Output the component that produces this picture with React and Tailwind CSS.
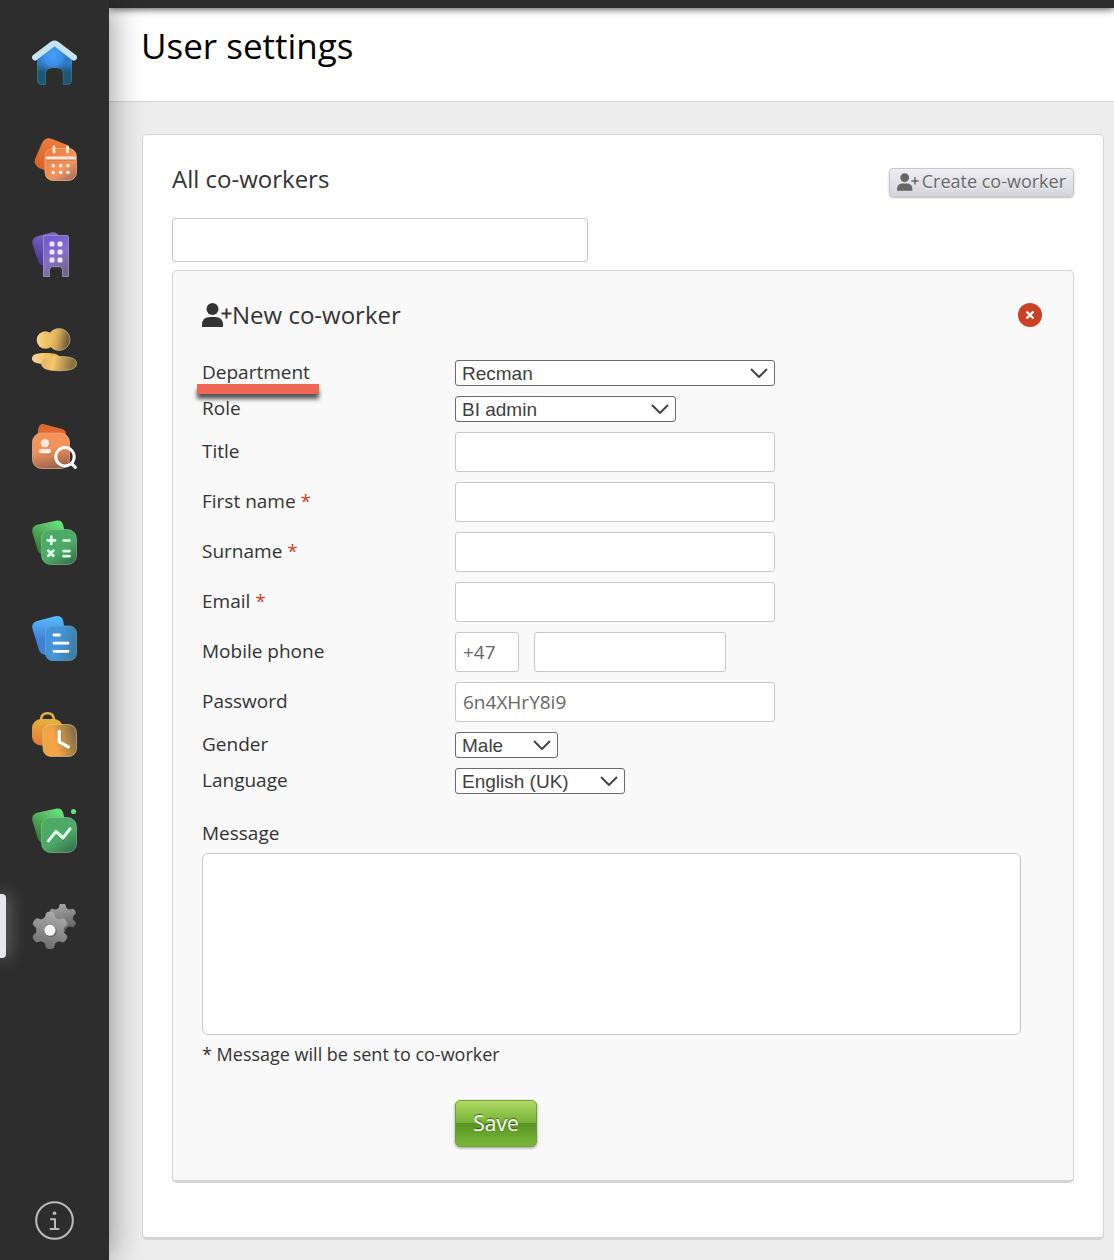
import React, { useState } from 'react';

// Outline of a six-toothed cog with soft corners
const gearPath = (cx, cy, radius, depth) => {
  const points = [];
  for (let i = 0; i < 144; i++) {
    const angle = (i / 144) * Math.PI * 2;
    const r = radius + depth * Math.tanh(2.2 * Math.cos(6 * (angle - Math.PI / 2)) + 0.1);
    points.push(`${(cx + r * Math.cos(angle)).toFixed(2)} ${(cy + r * Math.sin(angle)).toFixed(2)}`);
  }
  return `M${points.join('L')}Z`;
};

const HomeIcon = () => (
  <svg width="45" height="45" viewBox="0 0 45 45" fill="none">
    <defs>
      <linearGradient id="home-base" x1="0" y1="12" x2="0" y2="45" gradientUnits="userSpaceOnUse">
        <stop offset="0.35" stopColor="#2f80cf" />
        <stop offset="0.6" stopColor="#1f5673" />
      </linearGradient>
      <radialGradient id="home-glow" cx="21" cy="16" r="19" gradientUnits="userSpaceOnUse">
        <stop offset="0" stopColor="#44a0fa" />
        <stop offset="0.5" stopColor="#3b8ee6" />
        <stop offset="1" stopColor="#225a80" stopOpacity="0" />
      </radialGradient>
    </defs>
    <path d="M5 18L20 7.500Q22.500 6 25 7.500L40 18V40Q40 45 35 45H31V34Q31 28 25 28H20Q14 28 14 34V45H10Q5 45 5 40Z" fill="url(#home-base)" />
    <path d="M5 18L20 7.500Q22.500 6 25 7.500L40 18V40Q40 45 35 45H31V34Q31 28 25 28H20Q14 28 14 34V45H10Q5 45 5 40Z" fill="url(#home-glow)" />
    <path d="M5.500 22V40Q5.500 44.500 10 44.500H13.500V34Q14 27.700 20 27.700H25Q31 27.700 31.300 34V44.500H35Q39.500 44.500 39.500 40V22" stroke="#3d8aa5" strokeOpacity="0.45" />
    <path d="M3 17.500L20.500 4.200Q22.500 3 24.500 4.200L42 17.500" stroke="#c3e3f0" strokeWidth="6" strokeLinecap="round" strokeLinejoin="round" />
  </svg>
);

const CalendarIcon = () => (
  <svg width="45" height="45" viewBox="0 0 45 45" fill="none">
    <defs>
      <linearGradient id="cal-back" x1="20" y1="2" x2="8" y2="35" gradientUnits="userSpaceOnUse">
        <stop stopColor="#ed7e3c" />
        <stop offset="1" stopColor="#d75f28" />
      </linearGradient>
      <linearGradient id="cal-front" x1="20" y1="14" x2="44" y2="45" gradientUnits="userSpaceOnUse">
        <stop stopColor="#e9803f" />
        <stop offset="0.55" stopColor="#f09560" />
        <stop offset="1" stopColor="#976a5b" />
      </linearGradient>
    </defs>
    <path d="M20 3L34 8.500Q40 11 38 17L30 35Q27 39 21 37L8 32.500Q1 29 3 23L10 7Q13 0.500 20 3Z" fill="url(#cal-back)" />
    <rect x="13" y="12.500" width="31.500" height="32" rx="8" fill="url(#cal-front)" stroke="#f6b78f" strokeOpacity="0.7" />
    <path d="M14.500 23H43" stroke="#b55720" strokeOpacity="0.6" strokeWidth="3" />
    <path d="M15 22H42.500M22 11V16M35.500 11V16" stroke="#fbe8dc" strokeWidth="2.800" strokeLinecap="round" />
    {[21.3, 28.7, 36].map((x) => (
      <g key={x} fill="#fff4ec">
        <circle cx={x} cy="29.800" r="1.700" />
        <circle cx={x} cy="36.500" r="1.700" />
      </g>
    ))}
  </svg>
);

const BuildingIcon = () => (
  <svg width="45" height="45" viewBox="0 0 45 45" fill="none">
    <defs>
      <linearGradient id="bld-back" x1="18" y1="0" x2="8" y2="34" gradientUnits="userSpaceOnUse">
        <stop stopColor="#8068c4" />
        <stop offset="1" stopColor="#45339b" />
      </linearGradient>
      <linearGradient id="bld-front" x1="12" y1="6" x2="37" y2="42" gradientUnits="userSpaceOnUse">
        <stop stopColor="#7059d4" />
        <stop offset="0.5" stopColor="#8571c4" />
        <stop offset="1" stopColor="#6c6486" />
      </linearGradient>
    </defs>
    <path d="M6 4L20 0.300Q25 -0.500 27 4L30 33H12Q8 34 6 29L0.500 12Q-0.500 6 6 4Z" fill="url(#bld-back)" />
    <path d="M13 3.500H35Q36.500 3.500 36.500 5V44.500H30.500V38Q30.500 34.700 27.500 34.700H20.500Q17.500 34.700 17.500 38V44.500H11.500V5Q11.500 3.500 13 3.500Z" fill="url(#bld-front)" stroke="#afa2d8" strokeOpacity="0.7" />
    {[9.5, 17.5, 25.5].map((y) => (
      <g key={y} fill="#eee6ff">
        <rect x="17.500" y={y} width="5" height="5" rx="1.500" />
        <rect x="25.500" y={y} width="5" height="5" rx="1.500" />
      </g>
    ))}
  </svg>
);

const PeopleIcon = () => (
  <svg width="45" height="45" viewBox="0 0 45 45" fill="none">
    <defs>
      <linearGradient id="ppl-back" x1="0" y1="0" x2="1" y2="0">
        <stop stopColor="#f7d79c" />
        <stop offset="0.7" stopColor="#f3b94b" />
      </linearGradient>
      <linearGradient id="ppl-head" x1="16" y1="9" x2="39" y2="14" gradientUnits="userSpaceOnUse">
        <stop offset="0.1" stopColor="#f0c266" />
        <stop offset="0.4" stopColor="#d7aa58" />
        <stop offset="0.85" stopColor="#72603c" />
      </linearGradient>
      <linearGradient id="ppl-body" x1="9" y1="32" x2="45" y2="38" gradientUnits="userSpaceOnUse">
        <stop offset="0.1" stopColor="#e5ba65" />
        <stop offset="0.35" stopColor="#f6c76a" />
        <stop offset="0.85" stopColor="#8b7040" />
      </linearGradient>
    </defs>
    <circle cx="13.500" cy="12" r="8.800" fill="url(#ppl-back)" />
    <path d="M14 25C24 25 28 27 28 31S23 36 14 36S0 34.500 0 30.500S4 25 14 25Z" fill="url(#ppl-back)" />
    <circle cx="27" cy="11.500" r="11" fill="url(#ppl-head)" stroke="#dcc28a" strokeOpacity="0.6" />
    <path d="M27 28.500C40 28.500 44.500 31 44.500 35.500S40 42.700 27 42.700S9.500 40 9.500 35.500S14 28.500 27 28.500Z" fill="url(#ppl-body)" stroke="#dcc28a" strokeOpacity="0.7" />
  </svg>
);

const CandidateSearchIcon = () => (
  <svg width="45" height="45" viewBox="0 0 45 45" fill="none">
    <defs>
      <linearGradient id="cs-front" x1="17" y1="15" x2="24" y2="46" gradientUnits="userSpaceOnUse">
        <stop offset="0.3" stopColor="#f1935b" />
        <stop offset="1" stopColor="#935f4c" />
      </linearGradient>
    </defs>
    <path d="M13 0.400L30 5Q34 6 34 10V20H4L6.500 4Q8 -1 13 0.400Z" fill="#df6a2f" />
    <rect x="0.500" y="9.200" width="37" height="35.300" rx="9" fill="url(#cs-front)" stroke="#f6b68d" strokeOpacity="0.7" />
    <circle cx="13.500" cy="20" r="4.200" fill="#a64f20" fillOpacity="0.4" />
    <circle cx="13" cy="19.300" r="4.200" fill="#fdebdf" />
    <rect x="7.500" y="26" width="12" height="4.500" rx="2.200" fill="#a64f20" fillOpacity="0.5" />
    <rect x="7" y="25" width="12" height="4.500" rx="2.200" fill="#fdebdf" />
    <circle cx="33" cy="32.700" r="9.200" stroke="#fff" strokeWidth="3" />
    <path d="M39.700 39.700L43.300 43.300" stroke="#fff" strokeWidth="3.200" strokeLinecap="round" />
  </svg>
);

const GreenTile = ({ id, children }) => (
  <svg width="45" height="45" viewBox="0 0 45 45" fill="none">
    <defs>
      <linearGradient id={`${id}-back`} x1="25" y1="2" x2="6" y2="28" gradientUnits="userSpaceOnUse">
        <stop stopColor="#66df7b" />
        <stop offset="1" stopColor="#37803f" />
      </linearGradient>
      <linearGradient id={`${id}-front`} x1="20" y1="12" x2="42" y2="45" gradientUnits="userSpaceOnUse">
        <stop offset="0.5" stopColor="#4daa66" />
        <stop offset="1" stopColor="#34664a" />
      </linearGradient>
    </defs>
    <path d="M6 4.500L25 0.500Q29.500 -0.300 31 4.500L37 27L14 35Q7 36 5 28L0.500 13Q-1 6 6 4.500Z" fill={`url(#${id}-back)`} />
    <rect x="9.500" y="9.500" width="35" height="35" rx="9" fill={`url(#${id}-front)`} stroke="#83ca91" strokeOpacity="0.6" />
    {children}
  </svg>
);

const CalculatorIcon = () => (
  <GreenTile id="calc">
    <path d="M19.300 16.700V24M15.600 20.300H23M31.500 20.500H37.500M16.300 30.700L21.300 35.700M21.300 30.700L16.300 35.700M31.500 31.200H37.500M31.500 36.200H37.500" stroke="#dcffe5" strokeWidth="2.700" strokeLinecap="round" />
  </GreenTile>
);

const ChartIcon = () => (
  <GreenTile id="chart">
    <path d="M17 34L24 24L31 31L38 21.500" stroke="#245a37" strokeOpacity="0.5" strokeWidth="3" strokeLinecap="round" />
    <path d="M16.500 33L24 23.500L31 30L38 21" stroke="#e1fae9" strokeWidth="3.200" strokeLinecap="round" strokeLinejoin="round" />
    <circle cx="41.500" cy="3.500" r="2.600" fill="#5fe17b" />
  </GreenTile>
);

const DocumentIcon = () => (
  <svg width="45" height="45" viewBox="0 0 45 45" fill="none">
    <defs>
      <linearGradient id="doc-back" x1="15" y1="2" x2="15" y2="38" gradientUnits="userSpaceOnUse">
        <stop stopColor="#55b9f8" />
        <stop offset="0.6" stopColor="#407fdc" />
      </linearGradient>
      <linearGradient id="doc-front" x1="18" y1="26" x2="45" y2="32" gradientUnits="userSpaceOnUse">
        <stop offset="0.3" stopColor="#4594da" />
        <stop offset="1" stopColor="#3f7b9b" />
      </linearGradient>
    </defs>
    <path d="M5 5L23 0.300Q29 -0.800 31 4L36 32L14 38.500Q9 39.500 7 34L0.500 13Q-1 7 5 5Z" fill="url(#doc-back)" />
    <rect x="13.500" y="10" width="31" height="34.500" rx="7" fill="url(#doc-front)" stroke="#62b2d8" strokeOpacity="0.6" />
    <path d="M22 19H27.500M22 27.200H36M22 35.300H36" stroke="#fff" strokeWidth="2.800" strokeLinecap="round" />
  </svg>
);

const BagClockIcon = () => (
  <svg width="45" height="45" viewBox="0 0 45 45" fill="none">
    <defs>
      <linearGradient id="bag-back" x1="15" y1="6" x2="12" y2="34" gradientUnits="userSpaceOnUse">
        <stop stopColor="#e8b33a" />
        <stop offset="1" stopColor="#e47a38" />
      </linearGradient>
      <linearGradient id="bag-front" x1="16" y1="36" x2="45" y2="28" gradientUnits="userSpaceOnUse">
        <stop offset="0.3" stopColor="#f0a443" />
        <stop offset="0.95" stopColor="#8a704d" />
      </linearGradient>
    </defs>
    <path d="M9 10V7.500Q9.500 1.300 15.500 1.300T22 7.500V10" stroke="#e3b140" strokeWidth="2.600" />
    <rect x="0" y="7" width="31" height="26.500" rx="9" fill="url(#bag-back)" />
    <rect x="11" y="12.500" width="33.500" height="32" rx="8" fill="url(#bag-front)" stroke="#efc98c" strokeOpacity="0.6" />
    <path d="M28 20V31L37.500 36" stroke="#a65d20" strokeOpacity="0.5" strokeWidth="3.300" strokeLinecap="round" />
    <path d="M27.300 19.500V30L36.500 35" stroke="#fff" strokeWidth="3.300" strokeLinecap="round" strokeLinejoin="round" />
  </svg>
);

const SettingsIcon = () => (
  <svg width="45" height="45" viewBox="0 0 45 45" fill="none">
    <defs>
      <linearGradient id="gear-back" x1="30" y1="0" x2="34" y2="27" gradientUnits="userSpaceOnUse">
        <stop stopColor="#a5a5a5" />
        <stop offset="1" stopColor="#5c5c5c" />
      </linearGradient>
      <linearGradient id="gear-front" x1="26" y1="10" x2="16" y2="45" gradientUnits="userSpaceOnUse">
        <stop stopColor="#aaaaaa" />
        <stop offset="1" stopColor="#6e6e6e" />
      </linearGradient>
    </defs>
    <path d={gearPath(30.5, 14, 12.5, 2)} fill="url(#gear-back)" />
    <path d={gearPath(18, 26.3, 16, 2.5)} fill="url(#gear-front)" stroke="#b8b8b8" strokeOpacity="0.4" strokeWidth="0.700" />
    <circle cx="19" cy="27.500" r="5.800" fill="#444" fillOpacity="0.45" />
    <circle cx="18" cy="26.300" r="5.500" fill="#f4f4f4" />
  </svg>
);

const InfoIcon = () => (
  <svg width="39" height="39" viewBox="0 0 39 39" fill="none" stroke="#bdbdbd">
    <circle cx="19.500" cy="19.500" r="18.300" strokeWidth="2" />
    <path d="M16 18.300H20V27.700M15.500 28H23.500" strokeWidth="2" strokeLinecap="round" strokeLinejoin="round" />
    <circle cx="19.500" cy="12.300" r="1.800" fill="#bdbdbd" stroke="none" />
  </svg>
);

const UserPlusIcon = ({ className }) => (
  <svg viewBox="0 0 30 24" fill="currentColor" className={className}>
    <circle cx="10.500" cy="6" r="6" />
    <path d="M0 24V22Q0 14 8 14H13Q21 14 21 22V24Z" />
    <path d="M19.500 10.500H29.500M24.500 5.500V15.500" stroke="currentColor" strokeWidth="2" />
  </svg>
);

const navItems = [
  { label: 'Home', icon: HomeIcon },
  { label: 'Calendar', icon: CalendarIcon },
  { label: 'Companies', icon: BuildingIcon },
  { label: 'People', icon: PeopleIcon },
  { label: 'Candidates', icon: CandidateSearchIcon },
  { label: 'Accounting', icon: CalculatorIcon },
  { label: 'Documents', icon: DocumentIcon },
  { label: 'Time tracking', icon: BagClockIcon },
  { label: 'Reports', icon: ChartIcon },
  { label: 'Settings', icon: SettingsIcon, active: true },
];

const inputClass = 'border border-[#c8c8c8] rounded-[3px] bg-white px-[7px] text-[19px] text-[#666] focus:outline-none focus:border-blue-400';

function Row({ label, htmlFor, required, marked, children }) {
  return (
    <div className="flex items-center">
      <label htmlFor={htmlFor} className="relative w-[253px] shrink-0 pb-[2px] leading-6">
        {label}
        {required && <span className="text-[#cc4125]"> *</span>}
        {marked && (
          <span className="absolute -left-[5px] top-6 w-[122px] h-[10px] bg-[#ee6654] shadow-[0_5px_4px_rgba(0,0,0,0.65)]" />
        )}
      </label>
      {children}
    </div>
  );
}

function Select({ id, width, options }) {
  return (
    <div className={`relative ${width}`}>
      <select
        id={id}
        className="block w-full h-[26px] appearance-none border border-[#6b6b6b] rounded-[3px] bg-white pt-px pl-[6px] pr-7 font-['Liberation_Sans',sans-serif] text-[19px] leading-6 text-[#3f3f3f]"
      >
        {options.map((option) => (
          <option key={option}>{option}</option>
        ))}
      </select>
      <svg width="18" height="10" viewBox="0 0 18 10" fill="none" className="absolute right-[7px] top-2 pointer-events-none">
        <path d="M1 1L9 9L17 1" stroke="#444" strokeWidth="2" />
      </svg>
    </div>
  );
}

export default function App() {
  const [search, setSearch] = useState('');

  return (
    <div className="flex min-h-screen bg-[#ededed] font-['Open_Sans',sans-serif] text-[19px] text-[#333]">

      {/* Sidebar */}
      <aside className="relative z-20 w-[109px] shrink-0 flex flex-col items-center bg-[#2d2d2d] pt-10 pb-5 shadow-[0_0_32px_rgba(0,0,0,0.45)]">
        <nav className="w-full flex flex-col gap-[51px]">
          {navItems.map(({ label, icon: Icon, active }) => (
            <a key={label} href="#" aria-label={label} className="relative flex items-center justify-center">
              {active && (
                <span className="absolute left-0 -top-[10px] w-[6px] h-16 rounded-r bg-[#e6e6ec] shadow-[0_0_18px_rgba(255,255,255,0.6)]" />
              )}
              <Icon />
            </a>
          ))}
        </nav>
        <button type="button" aria-label="Information" className="mt-auto">
          <InfoIcon />
        </button>
      </aside>

      <main className="flex-1 min-w-0">
        <div className="relative z-10 h-2 bg-[#2d2d2d] shadow-[0_0_9px_rgba(0,0,0,0.9)]" />

        {/* Page title */}
        <header className="bg-white border-b border-[#d4d4d4] pl-8 pt-[14px] pb-[31px]">
          <h1 className="text-[35px] leading-[48px] text-black">User settings</h1>
        </header>

        <section className="mt-8 ml-[33px] mr-[10px] mb-5 bg-white border border-b-[3px] border-[#d4d4d4] rounded-[5px] px-[29px] pt-[33px] pb-[54px]">
          <div className="flex items-start justify-between">
            <h2 className="text-[24px] leading-[22px]">All co-workers</h2>
            <button
              type="button"
              className="flex items-center gap-[3px] h-[29px] px-[7px] pb-[2px] border border-[#c6c7cc] rounded bg-linear-to-b from-[#eeeef3] to-[#d5d6dd] text-[18px] text-[#666] [text-shadow:0_1px_0_#fff] shadow-[0_1px_2px_rgba(0,0,0,0.25)]"
            >
              <UserPlusIcon className="w-[22px] h-[18px]" />
              Create co-worker
            </button>
          </div>

          <input
            type="text"
            aria-label="Search co-workers"
            value={search}
            onChange={(e) => setSearch(e.target.value)}
            className={`${inputClass} block mt-[21px] w-[416px] max-w-full h-11`}
          />

          {/* New co-worker form */}
          <form
            onSubmit={(e) => e.preventDefault()}
            className="mt-2 bg-[#f9f9f9] border border-b-[3px] border-[#d4d4d4] rounded-[5px] pl-[29px] pr-[31px] pt-8 pb-[33px]"
          >
            <div className="flex items-center justify-between h-6">
              <h3 className="flex items-center text-[24px] leading-6">
                <UserPlusIcon className="w-[30px] h-6" />
                New co-worker
              </h3>
              <button type="button" aria-label="Close" className="flex items-center justify-center size-6 rounded-full bg-[#cc4125]">
                <svg width="10" height="10" viewBox="0 0 10 10" fill="none">
                  <path d="M1.500 1.500L8.500 8.500M8.500 1.500L1.500 8.500" stroke="#fff" strokeWidth="2.400" />
                </svg>
              </button>
            </div>

            <div className="mt-[33px] flex flex-col gap-[10px]">
              <Row label="Department" htmlFor="department" marked>
                <Select id="department" width="w-80" options={['Recman']} />
              </Row>
              <Row label="Role" htmlFor="role">
                <Select id="role" width="w-[221px]" options={['BI admin']} />
              </Row>
              <Row label="Title" htmlFor="title">
                <input id="title" type="text" className={`${inputClass} w-80 h-10`} />
              </Row>
              <Row label="First name" htmlFor="first-name" required>
                <input id="first-name" type="text" className={`${inputClass} w-80 h-10`} />
              </Row>
              <Row label="Surname" htmlFor="surname" required>
                <input id="surname" type="text" className={`${inputClass} w-80 h-10`} />
              </Row>
              <Row label="Email" htmlFor="email" required>
                <input id="email" type="email" className={`${inputClass} w-80 h-10`} />
              </Row>
              <Row label="Mobile phone" htmlFor="mobile">
                <input type="text" aria-label="Country code" defaultValue="+47" className={`${inputClass} w-16 h-10 mr-[15px]`} />
                <input id="mobile" type="tel" className={`${inputClass} w-48 h-10`} />
              </Row>
              <Row label="Password" htmlFor="password">
                <input id="password" type="text" defaultValue="6n4XHrY8i9" className={`${inputClass} w-80 h-10`} />
              </Row>
              <Row label="Gender" htmlFor="gender">
                <Select id="gender" width="w-[103px]" options={['Male', 'Female']} />
              </Row>
              <Row label="Language" htmlFor="language">
                <Select id="language" width="w-[170px]" options={['English (UK)']} />
              </Row>
            </div>

            <div className="mt-[27px] pr-[21px]">
              <label htmlFor="message" className="block leading-6">Message</label>
              <textarea
                id="message"
                className="block mt-2 w-full h-[182px] resize-none border border-[#c8c8c8] rounded-md bg-white p-[7px] focus:outline-none focus:border-blue-400"
              />
              <p className="mt-[7px] text-[18px] leading-6">* Message will be sent to co-worker</p>
            </div>

            <button
              type="submit"
              className="block mt-[34px] ml-[253px] w-[82px] h-[47px] rounded-[5px] border border-[#76a02f] bg-[linear-gradient(to_bottom,#b0d966_0%,#75b234_49%,#589422_50%,#78b83a_100%)] text-[21px] text-white [text-shadow:0_-1px_1px_rgba(0,0,0,0.5)] shadow-[0_1px_3px_rgba(0,0,0,0.4)]"
            >
              Save
            </button>
          </form>
        </section>
      </main>
    </div>
  );
}
